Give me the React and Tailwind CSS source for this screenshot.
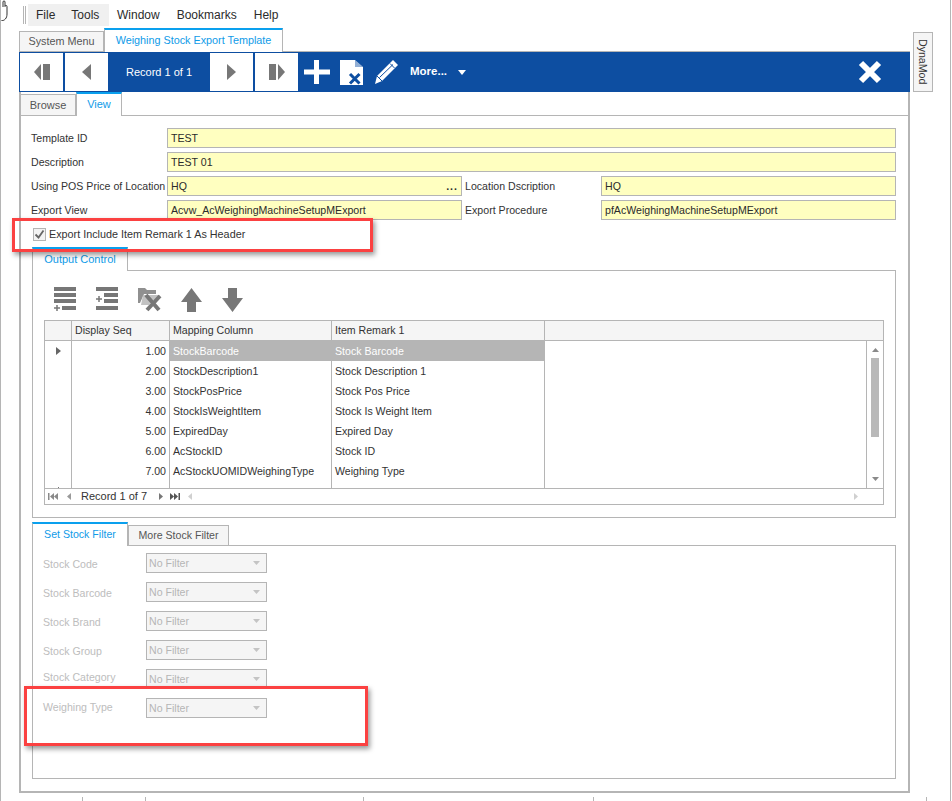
const MENU = ["Window", "Bookmarks", "Help"];

const RECORD_BTN = "flex h-[38px] w-[43px] items-center justify-center bg-white";
const LINE = "border-[#b5b5b5]";

const FIELD = "flex h-5 items-center border border-[#b5b5b5] bg-[#ffffc0] px-[3px] text-[#2b2b2b]";

const ROWS = [
  ["1.00", "StockBarcode", "Stock Barcode"],
  ["2.00", "StockDescription1", "Stock Description 1"],
  ["3.00", "StockPosPrice", "Stock Pos Price"],
  ["4.00", "StockIsWeightItem", "Stock Is Weight Item"],
  ["5.00", "ExpiredDay", "Expired Day"],
  ["6.00", "AcStockID", "Stock ID"],
  ["7.00", "AcStockUOMIDWeighingType", "Weighing Type"],
];

const FILTERS = [
  { label: "Stock Code", labelClass: "pt-[2px]" },
  { label: "Stock Barcode", labelClass: "pt-[2px]" },
  { label: "Stock Brand", labelClass: "pt-[2px]" },
  { label: "Stock Group", labelClass: "pt-[2px]" },
  { label: "Stock Category", labelClass: "-mt-[4px]" },
  { label: "Weighing Type", labelClass: "-mt-[2px]" },
];

function Glyph({ w, h, d, fill = "#777777", className = "" }) {
  return (
    <svg width={w} height={h} viewBox={`0 0 ${w} ${h}`} className={`shrink-0 ${className}`}>
      <path d={d} fill={fill} />
    </svg>
  );
}

function ToolbarIcons() {
  return (
    <div className="ml-[4px] flex items-center gap-[10px]">
      {/* add */}
      <Glyph w={26} h={24} fill="#ffffff" d="M10 0h5v9.500h11v5H15V24h-5V14.500H0v-5h10z" />
      {/* delete page */}
      <svg width={24} height={25} viewBox="0 0 24 25" className="shrink-0">
        <path d="M0 0h15l8 7v18H0z" fill="#ffffff" />
        <path d="M15 0v7h8z" fill="#0d4ea1" fillOpacity="0.45" />
        <path d="M10 14l9.500 9.500M19.500 14L10 23.500" stroke="#0d4ea1" strokeWidth="3" />
      </svg>
      {/* edit */}
      <svg width={24} height={24} viewBox="0 0 24 24" className="shrink-0">
        <path d="M19 0l5 5L8 21l-7 3 2-8z" fill="#ffffff" />
        <path d="M16 3.500l4.500 4.500M5.500 17.500L19 4.500M3 16l5 5" stroke="#0d4ea1" strokeWidth="1" fill="none" />
      </svg>
    </div>
  );
}

function GridIcons() {
  return (
    <div className="ml-[20px] flex h-[26px] items-center gap-[18px] pt-[1px]">
      <svg width={24} height={25} viewBox="0 0 24 25" className="shrink-0">
        <path d="M1 0h22v4H1zM1 6h22v4H1zM1 12h22v4H1zM9 19h14v4H9z" fill="#777777" />
        <path d="M1 21h6M4 18v6" stroke="#777777" strokeWidth="1.500" />
      </svg>
      <svg width={24} height={25} viewBox="0 0 24 25" className="shrink-0">
        <path d="M1 0h22v4H1zM9 6h14v4H9zM9 12h14v4H9zM1 19h22v4H1z" fill="#777777" />
        <path d="M1 12h6M4 9v6" stroke="#777777" strokeWidth="1.500" />
      </svg>
      <svg width={25} height={25} viewBox="0 0 25 25" className="shrink-0">
        <path d="M1 1h7l2 2h9v4H7l-4 9H1z" fill="#909090" />
        <path d="M6 8h17l-2 5-6 0-3 5H4z" fill="#c2c2c2" />
        <path d="M9 8l13 15M23 9L10 23" stroke="#777777" strokeWidth="4" />
      </svg>
      <Glyph w={23} h={24} d="M11.500 0L22 14h-6v10H7V14H1z" />
      <Glyph w={23} h={24} d="M7 0h9v10h6L11.500 24 1 10h6z" />
    </div>
  );
}

function Tab({ active, width, height, children, textClass = "" }) {
  if (active) {
    return (
      <div
        className={`flex h-full items-center justify-center border-x border-t-2 border-x-[#b5b5b5] border-t-[#0aa0ee] bg-white pb-[2px] text-[#0f9be8] ${width} ${textClass}`}
      >
        {children}
      </div>
    );
  }
  return (
    <div
      className={`mt-auto flex items-center justify-center border border-[#b5b5b5] bg-[#f5f5f5] text-[#555555] ${width} ${height}`}
    >
      {children}
    </div>
  );
}

function Grid() {
  return (
    <div className="mx-[11px] mt-[8px] flex h-[185px] flex-col border border-[#b5b5b5]">
      <div className="flex h-5 shrink-0 border-b border-[#b5b5b5] bg-[#f5f5f5] text-[#333333]">
        <div className="w-[27px] border-r border-[#b5b5b5]" />
        <div className="flex w-[98px] items-center border-r border-[#b5b5b5] pl-[3px]">Display Seq</div>
        <div className="flex w-[162px] items-center border-r border-[#b5b5b5] pl-[3px]">Mapping Column</div>
        <div className="flex w-[213px] items-center border-r border-[#b5b5b5] pl-[3px]">Item Remark 1</div>
      </div>
      <div className="flex h-[148px] shrink-0 border-b border-[#b5b5b5]">
        <div className="flex w-[822px] border-r border-[#b5b5b5]">
          <div className="flex w-[500px] flex-col">
            {ROWS.map(([seq, col, remark], i) => (
              <div key={seq} className="flex h-5 shrink-0 text-[#333333]">
                <div className="flex w-[27px] items-center justify-center border-r border-[#b5b5b5]">
                  {i === 0 && <Glyph w={5} h={8} d="M0 0l5 4-5 4z" fill="#666666" />}
                </div>
                <div className="flex w-[98px] items-center justify-end border-r border-[#b5b5b5] pr-[3px]">{seq}</div>
                <div
                  className={`flex w-[162px] items-center border-r border-[#b5b5b5] pl-[3px] ${i === 0 ? "bg-[#b5b5b5] text-white" : ""}`}
                >
                  {col}
                </div>
                <div
                  className={`flex w-[213px] items-center border-r border-[#b5b5b5] pl-[3px] ${i === 0 ? "bg-[#b5b5b5] text-white" : ""}`}
                >
                  {remark}
                </div>
              </div>
            ))}
            <div className="flex flex-1">
              <div className="flex w-[27px] items-end justify-center border-r border-[#b5b5b5]">
                <div className="h-px w-px bg-[#777777]" />
              </div>
              <div className="w-[98px] border-r border-[#b5b5b5]" />
              <div className="w-[162px] border-r border-[#b5b5b5]" />
              <div className="w-[213px] border-r border-[#b5b5b5]" />
            </div>
          </div>
        </div>
        {/* vertical scrollbar */}
        <div className="flex flex-1 flex-col items-center pt-[7px]">
          <Glyph w={7} h={4} d="M3.500 0L7 4H0z" fill="#8a8a8a" />
          <div className="mt-[6px] h-[79px] w-2 bg-[#b9b9b9]" />
          <Glyph w={7} h={4} d="M0 0h7L3.500 4z" fill="#8a8a8a" className="mt-[40px]" />
        </div>
      </div>
      {/* navigator */}
      <div className="flex flex-1 items-center pl-[3px] text-[#333333]">
        <Glyph w={10} h={7} d="M0 0h1.500v7H0zM6 0v7L2 3.500zM10 0v7L6 3.500z" fill="#8a8a8a" />
        <Glyph w={4} h={7} d="M4 0v7L0 3.500z" fill="#9a9a9a" className="ml-[9px]" />
        <span className="ml-[10px] w-[66px] text-[11px]">Record 1 of 7</span>
        <Glyph w={4} h={7} d="M0 0l4 3.500L0 7z" fill="#777777" className="ml-[12px]" />
        <Glyph w={10} h={7} d="M0 0l4 3.500L0 7zM4 0l4 3.500L4 7zM8.500 0H10v7H8.500z" fill="#555555" className="ml-[7px]" />
        <Glyph w={4} h={7} d="M4 0v7L0 3.500z" fill="#d0d0d0" className="ml-[8px]" />
        <Glyph w={4} h={7} d="M0 0l4 3.500L0 7z" fill="#d0d0d0" className="ml-[662px]" />
      </div>
    </div>
  );
}

export default function App() {
  return (
    <div
      className="relative flex h-[801px] w-[951px] items-start overflow-hidden border-x border-[#b5b5b5] bg-white text-[10.6px] leading-none whitespace-nowrap text-[#333333]"
      style={{ fontFamily: '"Liberation Sans", Tahoma, sans-serif' }}
    >
      <div className="ml-[18px] flex h-[793px] w-[891px] shrink-0 flex-col">
        {/* Menu bar */}
        <div className="flex h-[28px] shrink-0 items-start pt-[4px] text-[12px] text-[#2b2b2b]">
          <div className="ml-[4px] mt-[2px] h-[18px] w-[3px] border-x border-[#b5b5b5]" />
          <div className="ml-[2px] flex h-[22px] w-[81px] items-center gap-[16px] bg-[#f0f0f0] pl-[8px]">
            <span>File</span>
            <span>Tools</span>
          </div>
          <div className="flex h-[22px] items-center gap-[17px] pl-[8px]">
            {MENU.map((m) => (
              <span key={m}>{m}</span>
            ))}
          </div>
        </div>

        {/* Document tabs */}
        <div className="flex h-6 shrink-0 text-[10.8px]">
          <Tab width="w-[85px]" height="h-[21px]">System Menu</Tab>
          <Tab active width="w-[179px]">Weighing Stock Export Template</Tab>
          <div className="flex-1 border-b border-[#b5b5b5]" />
        </div>

        {/* Record toolbar */}
        <div className="flex h-10 shrink-0 items-center gap-[2px] bg-[#0d4ea1] pl-[1px] pr-[1px]">
          <div className={RECORD_BTN}>
            <Glyph w={16} h={16} d="M7 0v16L0 8zM9 0h7v16H9z" />
          </div>
          <div className={RECORD_BTN}>
            <Glyph w={9} h={16} d="M9 0v16L0 8z" />
          </div>
          <div className="flex w-[98px] justify-center text-[11px] text-white">Record 1 of 1</div>
          <div className={RECORD_BTN}>
            <Glyph w={9} h={16} d="M0 0l9 8-9 8z" />
          </div>
          <div className={RECORD_BTN}>
            <Glyph w={16} h={16} d="M0 0h7v16H0zM9 0l7 8-7 8z" />
          </div>
          <ToolbarIcons />
          <span className="ml-[10px] text-[11.500px] font-bold text-white">More...</span>
          <Glyph w={8} h={5} d="M0 0h8L4 5z" fill="#ffffff" className="ml-[9px]" />
          <svg width={24} height={24} viewBox="0 0 24 24" className="ml-auto mr-[27px] shrink-0">
            <path d="M3 3l18 18M21 3L3 21" stroke="#ffffff" strokeWidth="6" />
          </svg>
        </div>

        {/* Browse / View */}
        <div className={`flex flex-1 flex-col border-x-2 border-b-2 ${LINE}`}>
          <div className="-ml-px flex h-6 shrink-0 text-[11px]">
            <Tab width="w-[56px]" height="h-[22px]">Browse</Tab>
            <Tab active width="w-[46px]">View</Tab>
            <div className="flex-1 border-b border-[#b5b5b5]" />
          </div>

          <div className="flex flex-1 flex-col">
            {/* Header form */}
            <div className="flex flex-col gap-1 pl-[10px] pr-[12px] pt-3">
              <div className="flex items-center">
                <span className="w-[136px]">Template ID</span>
                <div className={`${FIELD} flex-1`}>TEST</div>
              </div>
              <div className="flex items-center">
                <span className="w-[136px]">Description</span>
                <div className={`${FIELD} flex-1`}>TEST 01</div>
              </div>
              <div className="flex items-center">
                <span className="w-[136px]">Using POS Price of Location</span>
                <div className={`${FIELD} w-[295px] justify-between`}>
                  <span>HQ</span>
                  <span className="font-bold tracking-[1px]">...</span>
                </div>
                <span className="ml-[3px] w-[136px]">Location Dscription</span>
                <div className={`${FIELD} flex-1`}>HQ</div>
              </div>
              <div className="flex items-center">
                <span className="w-[136px]">Export View</span>
                <div className={`${FIELD} w-[295px]`}>Acvw_AcWeighingMachineSetupMExport</div>
                <span className="ml-[3px] w-[136px]">Export Procedure</span>
                <div className={`${FIELD} flex-1`}>pfAcWeighingMachineSetupMExport</div>
              </div>
            </div>

            {/* Checkbox */}
            <div className="ml-[12px] mt-[8px] flex h-[12px] items-center gap-[3px]">
              <div className="flex h-[13px] w-[13px] items-center justify-center border border-[#b5b5b5] bg-[#f3f3f3]">
                <svg width={11} height={11} viewBox="0 0 11 11">
                  <path d="M1.500 5.500l3 3 5-7" fill="none" stroke="#666666" strokeWidth="1.800" />
                </svg>
              </div>
              <span className="text-[10.8px]">Export Include Item Remark 1 As Header</span>
            </div>

            {/* Output Control */}
            <div className="ml-[11px] mr-[12px] mt-[7px] flex h-[24px] shrink-0 text-[11px]">
              <Tab active width="w-[96px]">Output Control</Tab>
              <div className="flex-1 border-b border-[#b5b5b5]" />
            </div>
            <div className={`ml-[11px] mr-[12px] flex h-[247px] shrink-0 flex-col border-x border-b ${LINE} pt-[15px]`}>
              <GridIcons />
              <Grid />
            </div>

            {/* Stock filters */}
            <div className="ml-[11px] mr-[12px] mt-[4px] flex h-[24px] shrink-0">
              <Tab active width="w-[96px]">Set Stock Filter</Tab>
              <Tab width="w-[101px]" height="h-[21px]">More Stock Filter</Tab>
              <div className="flex-1 border-b border-[#b5b5b5]" />
            </div>
            <div className={`ml-[11px] mr-[12px] flex h-[233px] shrink-0 flex-col gap-[9px] border-x border-b ${LINE} pl-[10px] pt-[7px]`}>
              {FILTERS.map((f) => (
                <div key={f.label} className="flex h-5 items-center">
                  <span className={`w-[103px] text-[#bdbdbd] ${f.labelClass}`}>{f.label}</span>
                  <div className="flex h-5 w-[121px] items-center justify-between border border-[#b5b5b5] bg-[#f5f5f5] pl-[2px] pr-[6px] text-[#b5b5b5]">
                    <span>No Filter</span>
                    <Glyph w={7} h={4} d="M0 0h7L3.500 4z" fill="#c4c4c4" />
                  </div>
                </div>
              ))}
            </div>
          </div>
        </div>
      </div>

      {/* Side tab */}
      <div className="ml-[3px] mt-[32px] flex h-[60px] w-5 shrink-0 items-center justify-center border border-[#b5b5b5] bg-[#f5f5f5] [writing-mode:vertical-rl]">
        DynaMod
      </div>

      {/* Hand cursor, hides the top of the left rule */}
      <div className="absolute -left-px top-0 h-[21px] w-[9px] bg-white">
        <svg width={9} height={21} viewBox="0 0 9 21">
          <path d="M0 21c5 0 7-3 7-7V6.500C7 5 5 5 5 6.500V2C5 0.500 3 0.500 3 2v5" fill="none" stroke="#333333" strokeWidth="1" />
        </svg>
      </div>

      {/* Red callouts drawn over the form */}
      <div className="absolute left-[11px] top-[218px] h-[34px] w-[361px] border-[3px] border-[#fb4141] shadow-[2px_3px_5px_rgba(0,0,0,0.4)]" />
      <div className="absolute left-[23px] top-[686px] h-[60px] w-[344px] border-[3px] border-[#fb4141] shadow-[2px_3px_5px_rgba(0,0,0,0.4)]" />

      {/* Cut-off rulers at the bottom edge */}
      <div className="absolute left-[81px] top-[797px] h-1 w-px bg-[#b5b5b5]" />
      <div className="absolute left-[144px] top-[797px] h-1 w-px bg-[#b5b5b5]" />
      <div className="absolute left-[362px] top-[797px] h-1 w-px bg-[#b5b5b5]" />
      <div className="absolute left-[592px] top-[797px] h-1 w-px bg-[#b5b5b5]" />
      <div className="absolute left-[925px] top-[797px] h-1 w-px bg-[#b5b5b5]" />
    </div>
  );
}
